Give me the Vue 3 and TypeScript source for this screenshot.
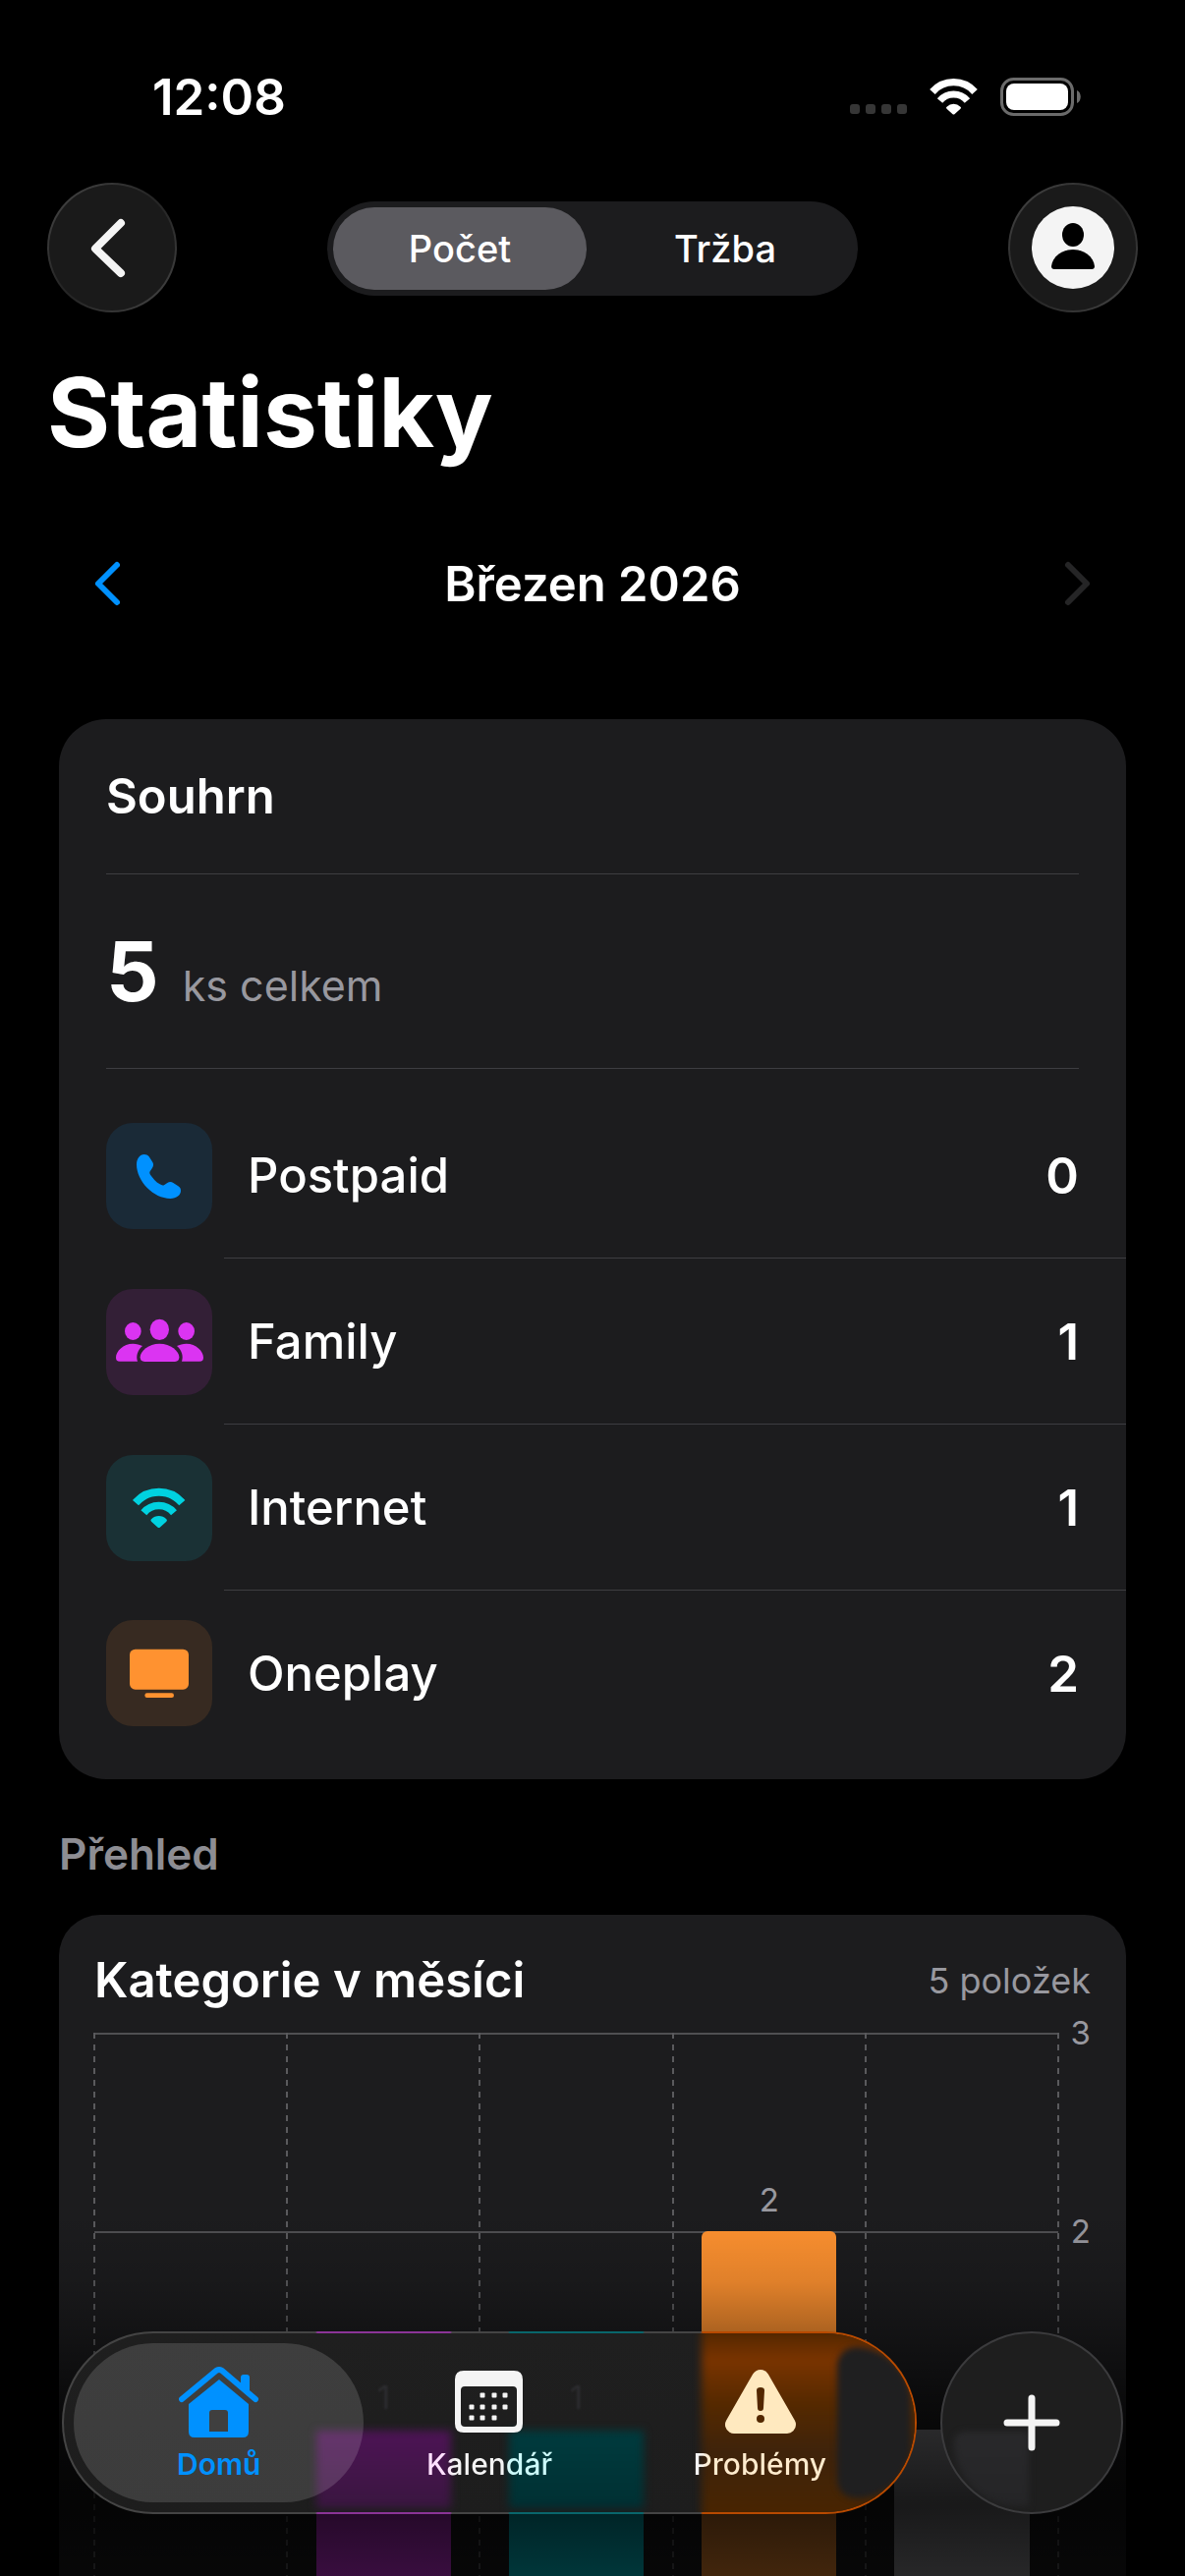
<script setup lang="ts">
import { ref } from 'vue'

type Mode = 'count' | 'revenue'
type IconName = 'phone' | 'family' | 'wifi' | 'tv'

interface Category {
  label: string
  value: number
  icon: IconName
}

interface Bar {
  id: string
  value: number
  color: string
}

const mode = ref<Mode>('count')
const modes: { id: Mode; label: string }[] = [
  { id: 'count', label: 'Počet' },
  { id: 'revenue', label: 'Tržba' },
]

const categories: Category[] = [
  { label: 'Postpaid', value: 0, icon: 'phone' },
  { label: 'Family', value: 1, icon: 'family' },
  { label: 'Internet', value: 1, icon: 'wifi' },
  { label: 'Oneplay', value: 2, icon: 'tv' },
]

const axisMax = 3
const ticks = [3, 2, 1]
const bars: Bar[] = [
  { id: 'postpaid', value: 0, color: '#0091ff' },
  { id: 'family', value: 1, color: '#db34f2' },
  { id: 'internet', value: 1, color: '#00d2e0' },
  { id: 'oneplay', value: 2, color: '#ff9230' },
  { id: 'other', value: 1, color: '#98989d' },
]

const calendarDots: [number, number][] = [
  [28, 25], [40, 25], [51, 25],
  [17, 37], [28, 37], [40, 37], [51, 37],
  [17, 48], [28, 48], [40, 48],
]
</script>

<template>
  <div class="screen">
    <div class="status">
      <span class="time">12:08</span>
      <div class="indicators">
        <span class="cell"><i></i><i></i><i></i><i></i></span>
        <svg class="status-wifi" viewBox="77 102 168 121" aria-hidden="true">
          <path d="M90 146A94 94 0 0 1 232 146" fill="none" stroke="#fff" stroke-width="24" />
          <path d="M115 176A60 60 0 0 1 207 176" fill="none" stroke="#fff" stroke-width="23" />
          <path d="M158 221L138 203Q134 199 138 196Q148 186 161 186Q174 186 184 196Q188 199 184 203L164 221Q161 223 158 221Z" fill="#fff" />
        </svg>
        <svg class="battery" viewBox="0 0 82 39" aria-hidden="true">
          <rect x="1.5" y="1.5" width="72" height="36" rx="12" fill="none" stroke="#6b6b6b" stroke-width="3" />
          <rect x="6" y="6" width="63" height="27" rx="8" fill="#fff" />
          <path d="M78 13C83 15 83 24 78 26Z" fill="#6b6b6b" />
        </svg>
      </div>
    </div>

    <header class="nav">
      <button class="round" type="button" aria-label="Zpět">
        <svg width="132" height="132" viewBox="0 0 132 132" aria-hidden="true">
          <path d="M75 41L49 67L75 92" fill="none" stroke="#f4f4f4" stroke-width="8" stroke-linecap="round" stroke-linejoin="round" />
        </svg>
      </button>
      <div class="segmented" role="group" aria-label="Zobrazení">
        <button
          v-for="m in modes"
          :key="m.id"
          type="button"
          class="segment"
          :class="{ active: mode === m.id }"
          :aria-pressed="mode === m.id"
          @click="mode = m.id"
        >{{ m.label }}</button>
      </div>
      <button class="round" type="button" aria-label="Profil">
        <svg width="132" height="132" viewBox="0 0 132 132" aria-hidden="true">
          <circle cx="66" cy="66" r="42" fill="#f4f4f4" />
          <ellipse cx="66" cy="53" rx="11" ry="12" fill="#000" />
          <path d="M47 88Q44 88 44 85C45 75 55 68 66 68C77 68 87 75 88 85Q88 88 85 88Z" fill="#000" />
        </svg>
      </button>
    </header>

    <h1>Statistiky</h1>

    <div class="month">
      <button type="button" class="step" aria-label="Předchozí měsíc">
        <svg width="34" height="48" viewBox="0 0 34 48" aria-hidden="true">
          <path d="M26 5L7 24L26 43" fill="none" stroke="#0091ff" stroke-width="6" stroke-linecap="round" stroke-linejoin="round" />
        </svg>
      </button>
      <span class="month-name">Březen 2026</span>
      <button type="button" class="step" aria-label="Další měsíc" disabled>
        <svg width="34" height="48" viewBox="0 0 34 48" aria-hidden="true">
          <path d="M8 5L27 24L8 43" fill="none" stroke="#252526" stroke-width="6" stroke-linecap="round" stroke-linejoin="round" />
        </svg>
      </button>
    </div>

    <section class="card summary">
      <h2 class="summary-title">Souhrn</h2>
      <p class="total"><strong>5</strong><span>ks celkem</span></p>
      <ul class="rows">
        <li v-for="c in categories" :key="c.label" class="row">
          <span class="tile" :class="c.icon">
            <svg viewBox="0 0 324 324" aria-hidden="true">
              <path v-if="c.icon === 'phone'" fill="#0091ff" d="M116 96C103 96 93 110 93 127C93 178 145 231 196 231C215 231 228 220 228 207C228 201 226 197 220 193L205 183C199 179 193 179 187 183L178 189C173 192 169 190 164 187C152 180 142 168 135 158C132 153 132 150 135 146L141 137C145 131 145 125 142 120L131 103C127 98 122 96 116 96Z" />
              <g v-else-if="c.icon === 'family'" fill="#db34f2">
                <ellipse cx="163" cy="124" rx="29" ry="32" />
                <ellipse cx="82" cy="129" rx="25" ry="27" />
                <ellipse cx="245" cy="129" rx="25" ry="27" />
                <path d="M118 222C108 222 104 217 104 208C104 190 130 167 163 167C197 167 223 190 223 208C223 217 219 222 210 222Z" />
                <path d="M42 221C33 221 30 217 30 209C30 190 52 167 82 167C93 167 103 170 111 174C97 186 90 204 96 221Z" />
                <path d="M285 221C294 221 297 217 297 209C297 190 275 167 245 167C234 167 224 170 216 174C230 186 237 204 231 221Z" />
              </g>
              <g v-else-if="c.icon === 'wifi'" fill="none" stroke="#00d2e0">
                <path d="M90 146A94 94 0 0 1 232 146" stroke-width="24" />
                <path d="M115 176A60 60 0 0 1 207 176" stroke-width="23" />
                <path d="M158 221L138 203Q134 199 138 196Q148 186 161 186Q174 186 184 196Q188 199 184 203L164 221Q161 223 158 221Z" fill="#00d2e0" stroke="none" />
              </g>
              <g v-else fill="#ff9230">
                <rect x="72" y="89" width="180" height="123" rx="17" />
                <rect x="118" y="223" width="89" height="14" rx="7" />
              </g>
            </svg>
          </span>
          <span class="row-body">
            <span class="row-label">{{ c.label }}</span>
            <span class="row-value">{{ c.value }}</span>
          </span>
        </li>
      </ul>
    </section>

    <h3 class="section-title">Přehled</h3>

    <section class="card chart-card">
      <div class="chart-head">
        <h2>Kategorie v měsíci</h2>
        <span class="count">5 položek</span>
      </div>
      <div class="chart">
        <div class="plot">
          <div v-for="b in bars" :key="b.id" class="column">
            <span v-if="b.value" class="bar-label">{{ b.value }}</span>
            <div class="bar" :style="{ height: (b.value / axisMax) * 100 + '%', background: b.color }"></div>
          </div>
        </div>
        <div class="axis">
          <span v-for="t in ticks" :key="t">{{ t }}</span>
        </div>
      </div>
    </section>

    <div class="fade"></div>

    <div class="dock">
      <nav class="tabs">
        <div class="glass" aria-hidden="true">
          <span class="ghost first">1</span>
          <span class="ghost second">1</span>
          <span class="glow purple"></span>
          <span class="glow teal"></span>
          <span class="glow orange"></span>
          <span class="glow lens"></span>
        </div>
        <a class="tab selected" href="#domu" aria-current="page">
          <svg width="81" height="72" viewBox="0 0 81 72" aria-hidden="true">
            <g fill="#0091ff">
              <path d="M41 13L71 38V66Q71 72 65 72H16Q10 72 10 66V38Z" />
              <path d="M63 11Q63 8 66 8H69Q72 8 72 11V29L63 21Z" />
            </g>
            <path d="M3 33L38 4Q41 2 44 4L78 33" fill="none" stroke="#0091ff" stroke-width="6" stroke-linecap="round" stroke-linejoin="round" />
            <path d="M31 66V47Q31 44 34 44H47Q50 44 50 47V66Z" fill="#3f3f3f" />
          </svg>
          <span class="tab-label">Domů</span>
        </a>
        <a class="tab" href="#kalendar">
          <svg width="81" height="72" viewBox="-6 -4 81 72" aria-hidden="true">
            <path fill="#f4f4f4" fill-rule="evenodd" d="M9 0H60Q69 0 69 9V54Q69 63 60 63H9Q0 63 0 54V9Q0 0 9 0ZM10 16Q6 16 6 20V53Q6 57 10 57H59Q63 57 63 53V20Q63 16 59 16Z" />
            <rect v-for="([x, y], i) in calendarDots" :key="i" :x="x - 2.5" :y="y - 2.5" width="5" height="5" rx="1" fill="#f4f4f4" />
          </svg>
          <span class="tab-label tint-calendar">Kalendář</span>
        </a>
        <a class="tab" href="#problemy">
          <svg width="81" height="72" viewBox="-5 -3 81 72" aria-hidden="true">
            <path d="M36 9L9 56H63Z" fill="#ffe9bf" stroke="#ffe9bf" stroke-width="18" stroke-linejoin="round" />
            <path d="M32 21Q32 18 36 18Q40 18 40 21L39 39Q39 42 36 42Q33 42 33 39Z" fill="#532700" />
            <circle cx="36" cy="50" r="4" fill="#532700" />
          </svg>
          <span class="tab-label tint-problems">Problémy</span>
        </a>
      </nav>
      <button class="add" type="button" aria-label="Přidat">
        <span class="add-glow"></span>
        <svg width="58" height="58" viewBox="0 0 58 58" aria-hidden="true">
          <path d="M29 4V54M4 29H54" stroke="#f4f4f4" stroke-width="7" stroke-linecap="round" />
        </svg>
      </button>
    </div>
  </div>
</template>

<style>
body {
  background: #000;
}
</style>

<style scoped>
.screen {
  position: relative;
  display: flex;
  flex-direction: column;
  height: 100vh;
  overflow: hidden;
  box-sizing: border-box;
  background: #000;
  color: #fff;
  font-family: Inter, 'Liberation Sans', sans-serif;
  font-size: 49px;
  line-height: 61px;
}

.screen *,
.screen *::before {
  box-sizing: border-box;
}

h1,
h2,
h3,
p,
ul {
  margin: 0;
  padding: 0;
  list-style: none;
}

button {
  padding: 0;
  border: 0;
  background: none;
  color: inherit;
  font-family: inherit;
}

svg {
  display: block;
}

.status {
  flex: none;
  display: flex;
  align-items: center;
  justify-content: space-between;
  height: 150px;
  padding: 46px 106px 0 155px;
}

.time {
  font-size: 51px;
  font-weight: 600;
}

.indicators {
  display: flex;
  align-items: center;
  gap: 22px;
}

.cell {
  display: flex;
  gap: 6px;
  padding-top: 26px;
}

.cell i {
  width: 10px;
  height: 10px;
  border-radius: 3px;
  background: #363636;
}

.status-wifi {
  width: 51px;
  height: 37px;
}

.battery {
  width: 82px;
  height: 39px;
}

.nav {
  flex: none;
  display: flex;
  align-items: center;
  justify-content: space-between;
  margin-top: 36px;
  padding: 0 48px;
}

.round {
  width: 132px;
  height: 132px;
  border-radius: 50%;
  border: 2px solid transparent;
  background:
    linear-gradient(#1a1a1a, #1a1a1a) padding-box,
    linear-gradient(135deg, #484848, #262626 45%, #262626 55%, #484848) border-box;
}

.round svg {
  margin: -2px;
}

.segmented {
  display: flex;
  width: 540px;
  height: 96px;
  margin-top: 2px;
  padding: 6px;
  gap: 12px;
  border-radius: 48px;
  background: #1c1c1e;
}

.segment {
  flex: 1;
  border-radius: 42px;
  font-size: 38px;
  line-height: 48px;
  font-weight: 500;
}

.segment.active {
  background: #5b5a5f;
}

h1 {
  flex: none;
  margin-top: 42px;
  padding: 0 48px;
  font-size: 98px;
  line-height: 120px;
  font-weight: 700;
}

.month {
  flex: none;
  display: flex;
  align-items: center;
  justify-content: space-between;
  margin-top: 66px;
  padding: 0 60px;
}

.step {
  display: flex;
  align-items: center;
  justify-content: center;
  width: 100px;
  height: 96px;
}

.month-name {
  font-weight: 600;
}

.card {
  margin: 0 60px;
  background: #1c1c1e;
}

.summary {
  flex: none;
  margin-top: 90px;
  border-radius: 48px;
}

h2 {
  font-size: 49px;
  line-height: 61px;
  font-weight: 600;
}

.summary-title {
  margin: 0 48px;
  padding: 48px 0;
  border-bottom: 1px solid #3d3d41;
}

.total {
  display: flex;
  align-items: baseline;
  gap: 24px;
  height: 198px;
  margin: 0 48px;
  padding-top: 48px;
  border-bottom: 1px solid #3d3d41;
}

.total strong {
  font-size: 84px;
  line-height: 101px;
  font-weight: 700;
}

.total span {
  font-size: 43px;
  line-height: 60px;
  color: #98989f;
}

.rows {
  padding: 24px 0;
}

.row {
  display: flex;
  align-items: center;
  gap: 12px;
  padding-left: 48px;
}

.tile {
  flex: none;
  width: 108px;
  height: 108px;
  border-radius: 27px;
}

.tile.phone {
  background: #1a2a37;
}

.tile.family {
  background: #331f36;
}

.tile.wifi {
  background: #1a3135;
}

.tile.tv {
  background: #372a21;
}

.row-body {
  flex: 1;
  display: flex;
  align-items: center;
  justify-content: space-between;
  height: 169px;
  padding: 0 48px 0 24px;
  border-bottom: 1px solid #3d3d41;
}

.row:last-child .row-body {
  height: 168px;
  border-bottom: 0;
}

.row-label {
  font-weight: 500;
}

.row-value {
  font-size: 51px;
  font-weight: 600;
}

.section-title {
  flex: none;
  margin: 46px 60px 32px;
  font-size: 44px;
  line-height: 60px;
  font-weight: 600;
  color: #8d8d93;
}

.chart-card {
  flex: 1;
  min-height: 0;
  padding: 36px 36px 0;
  border-radius: 42px 42px 0 0;
}

.chart-head {
  display: flex;
  align-items: center;
  justify-content: space-between;
}

.count {
  font-size: 36px;
  line-height: 48px;
  color: #98989f;
}

.chart {
  display: flex;
  margin-top: 23px;
}

.plot {
  flex: 1;
  display: flex;
  height: 606px;
  background: repeating-linear-gradient(to bottom, #4f4f52 0 2px, transparent 2px 202px);
}

.column {
  position: relative;
  flex: 1;
  display: flex;
  flex-direction: column;
  align-items: center;
  justify-content: flex-end;
}

.column::before,
.column:last-child::after {
  content: '';
  position: absolute;
  top: 0;
  bottom: 0;
  left: -1px;
  width: 2px;
  background: repeating-linear-gradient(to bottom, #5a5a5d 0 6px, transparent 6px 12px);
}

.column:last-child::after {
  left: auto;
  right: -1px;
}

.bar-label {
  margin-bottom: 12px;
  font-size: 33px;
  line-height: 40px;
  color: #98989f;
}

.bar {
  flex: none;
  width: 70%;
  border-radius: 6px 6px 0 0;
}

.axis {
  display: flex;
  flex-direction: column;
  flex: none;
  width: 33px;
  margin-top: -20px;
  font-size: 33px;
  line-height: 40px;
  text-align: right;
  color: #98989f;
}

.axis span {
  height: 202px;
}

.fade {
  position: absolute;
  inset: auto 0 0;
  height: 372px;
  background: linear-gradient(
    to bottom,
    rgba(0, 0, 0, 0),
    rgba(0, 0, 0, 0.12) 72px,
    rgba(0, 0, 0, 0.32) 123px,
    rgba(0, 0, 0, 0.72) 218px,
    rgba(0, 0, 0, 0.84) 300px,
    rgba(0, 0, 0, 0.74)
  );
}

.dock {
  position: absolute;
  inset: auto 63px 63px;
  display: flex;
  gap: 24px;
}

.tabs {
  position: relative;
  flex: 1;
  display: flex;
  height: 186px;
  padding: 10px 20px;
  border-radius: 93px;
  border: 2px solid transparent;
  background:
    linear-gradient(#1f1f1f, #1d1d1d) padding-box,
    linear-gradient(to right, #444 0 258px, #8b3497 260px 395px, #444 397px 454px, #09666c 456px 591px, #444 593px 650px, #b84a00 652px) border-box;
}

.glass {
  position: absolute;
  inset: 0;
  overflow: hidden;
  border-radius: 91px;
}

.ghost {
  position: absolute;
  top: 45px;
  width: 137px;
  font-size: 33px;
  line-height: 40px;
  text-align: center;
  color: #2d2d30;
  filter: blur(1px);
}

.ghost.first {
  left: 257px;
}

.ghost.second {
  left: 453px;
}

.glow {
  position: absolute;
  top: 99px;
  bottom: 4px;
  width: 137px;
  filter: blur(4px);
}

.glow.purple {
  left: 257px;
  background: linear-gradient(#4d1455, #3a1640);
}

.glow.teal {
  left: 453px;
  background: linear-gradient(#003b3e, #003033);
}

.glow.orange {
  top: -8px;
  bottom: -8px;
  left: 649px;
  right: -8px;
  width: auto;
  background: linear-gradient(#4a2400, #7a3400 35px, #552900 80px, #3e230b 130px, #4a2500);
}

.glow.lens {
  top: 14px;
  bottom: 14px;
  left: 787px;
  right: 4px;
  width: auto;
  border-radius: 26px 76px 76px 26px;
  background: #1f1f20;
  filter: blur(3px);
}

.tab {
  position: relative;
  flex: 1;
  display: flex;
  flex-direction: column;
  align-items: center;
  padding-top: 24px;
  color: #f4f4f4;
  text-decoration: none;
}

.tab.selected {
  color: #0091ff;
}

.tab.selected::before {
  content: '';
  position: absolute;
  inset: 0 -10px;
  border-radius: 81px;
  background: rgba(255, 255, 255, 0.14);
}

.tab svg,
.tab-label {
  position: relative;
}

.tab-label {
  margin-top: 9px;
  font-size: 30px;
  line-height: 36px;
  font-weight: 600;
}

.tint-calendar,
.tint-problems {
  font-weight: 500;
  color: transparent;
  background-clip: text;
}

.tint-calendar {
  background-image: linear-gradient(to right, #ffe0ff 20px, #f4f4f4 28px 78px, #ccfafa 86px);
}

.tint-problems {
  background-image: linear-gradient(to right, #f4f4f4 6px, #ffebcd 16px);
}

.add {
  position: relative;
  flex: none;
  display: flex;
  align-items: center;
  justify-content: center;
  width: 186px;
  height: 186px;
  overflow: hidden;
  border-radius: 50%;
  border: 2px solid #3b3b3d;
  background: #1e1e1e;
}

.add svg {
  position: relative;
}

.add-glow {
  position: absolute;
  left: 12px;
  top: 100px;
  width: 76px;
  height: 76px;
  border-radius: 12px 0 0 70px;
  background: linear-gradient(#29292b, #252527);
  filter: blur(3px);
}
</style>
